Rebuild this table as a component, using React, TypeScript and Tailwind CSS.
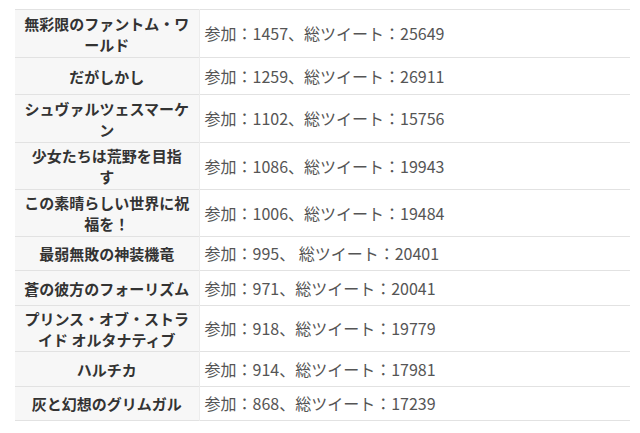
import React from "react";

const rows: { name: string[]; value: string; h: string }[] = [
  { name: ["無彩限のファントム・ワ", "ールド"], value: "参加：1457、総ツイート：25649", h: "h-[48px]" },
  { name: ["だがしかし"], value: "参加：1259、総ツイート：26911", h: "h-[37px]" },
  { name: ["シュヴァルツェスマーケ", "ン"], value: "参加：1102、総ツイート：15756", h: "h-[48px]" },
  { name: ["少女たちは荒野を目指", "す"], value: "参加：1086、総ツイート：19943", h: "h-[47px]" },
  { name: ["この素晴らしい世界に祝", "福を！"], value: "参加：1006、総ツイート：19484", h: "h-[47px]" },
  { name: ["最弱無敗の神装機竜"], value: "参加：995、 総ツイート：20401", h: "h-[34px]" },
  { name: ["蒼の彼方のフォーリズム"], value: "参加：971、総ツイート：20041", h: "h-[35px]" },
  { name: ["プリンス・オブ・ストラ", "イド オルタナティブ"], value: "参加：918、総ツイート：19779", h: "h-[46px]" },
  { name: ["ハルチカ"], value: "参加：914、総ツイート：17981", h: "h-[35px]" },
  { name: ["灰と幻想のグリムガル"], value: "参加：868、総ツイート：17239", h: "h-[34px]" },
];

export default function App() {
  return (
    <div
      className="w-[640px] h-[433px] bg-white pt-[9px] pl-[15px] overflow-hidden"
      style={{ fontFamily: '"Noto Sans CJK JP", "Noto Sans", sans-serif' }}
    >
      <table className="w-[615px] border-collapse table-fixed">
        <colgroup>
          <col className="w-[184px]" />
          <col className="w-[431px]" />
        </colgroup>
        <tbody>
          {rows.map((r, i) => (
            <tr key={i} className={`${r.h} border-t border-b border-[#e2e2e2]`}>
              <th className="bg-[#f7f7f7] border-r border-[#ececec] text-center align-middle font-bold text-[15px] leading-[21px] text-[#333] px-[4px] whitespace-nowrap">
                {r.name.map((l, j) => (
                  <div key={j}>{l}</div>
                ))}
              </th>
              <td className="text-left align-middle text-[16px] leading-[21px] text-[#555] pl-[5px] whitespace-nowrap">
                {r.value}
              </td>
            </tr>
          ))}
        </tbody>
      </table>
    </div>
  );
}
